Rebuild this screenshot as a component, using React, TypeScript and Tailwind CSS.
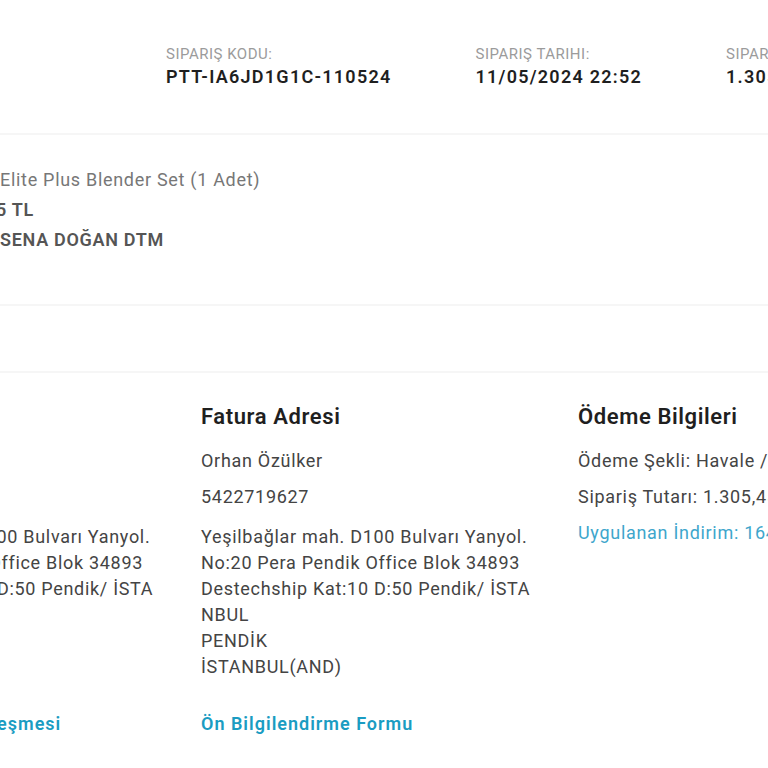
import React from 'react';

const addressLines = [
  'Yeşilbağlar mah. D100 Bulvarı Yanyol.',
  'No:20 Pera Pendik Office Blok 34893',
  'Destechship Kat:10 D:50 Pendik/ İSTA',
  'NBUL',
  'PENDİK',
  'İSTANBUL(AND)',
];

function OrderMeta({ label, value }: { label: string; value: string }) {
  return (
    <div className="flex flex-col shrink-0">
      <span className="text-[15px] leading-[20px] tracking-[0.5px] text-[#9b9b9b] uppercase">{label}</span>
      <span className="text-[18px] leading-[26px] tracking-[1.25px] font-semibold text-[#1f1f1f] whitespace-nowrap">
        {value}
      </span>
    </div>
  );
}

function ProductLine({ hidden, text, className, hiddenClass }: { hidden: string; text: string; className: string; hiddenClass: string }) {
  return (
    <div className={`flex whitespace-nowrap ${className}`}>
      <span className={`shrink-0 text-right overflow-hidden ${hiddenClass}`}>{hidden}</span>
      <span>{text}</span>
    </div>
  );
}

function AddressBlock({ title, link }: { title: string; link: string }) {
  return (
    <div className="flex flex-col">
      <h3 className="text-[22px] leading-[30px] tracking-[0.6px] font-semibold text-[#1f1f1f]">{title}</h3>
      <p className="mt-[11px] leading-[36px]">Orhan Özülker</p>
      <p className="leading-[36px]">5422719627</p>
      <div className="mt-[9px] leading-[26px]">
        {addressLines.map((line) => (
          <p key={line} className="whitespace-nowrap">{line}</p>
        ))}
      </div>
      <a className="mt-[31px] leading-[26px] tracking-[1px] font-semibold text-[#1a9cc2] whitespace-nowrap">{link}</a>
    </div>
  );
}

export default function App() {
  return (
    <div
      className="w-[768px] h-[768px] overflow-hidden bg-white text-[18px] tracking-[0.7px] text-[#444444]"
      style={{ fontFamily: 'Roboto, "Noto Sans", sans-serif' }}
    >
      {/* Sipariş özeti */}
      <div className="flex gap-[84px] pl-[166px] pt-[44px] h-[135px] border-b-2 border-[#f6f6f6]">
        <OrderMeta label="Sipariş Kodu:" value="PTT-IA6JD1G1C-110524" />
        <OrderMeta label="Sipariş Tarihi:" value="11/05/2024 22:52" />
        <OrderMeta label="Sipariş Tutarı:" value="1.305,45 TL" />
      </div>

      {/* Ürün */}
      <div className="h-[171px] border-b-2 border-[#f6f6f6]">
        <div className="-ml-[200px] pt-[30px] leading-[30px]">
          <ProductLine hidden="Braun " text="Elite Plus Blender Set (1 Adet)" className="text-[#777777]" hiddenClass="w-[200px]" />
          <ProductLine hidden="1.30" text="5 TL" className="font-semibold text-[#555555]" hiddenClass="w-[196px]" />
          <ProductLine hidden="" text="SENA DOĞAN DTM" className="font-semibold text-[#555555]" hiddenClass="w-[200px]" />
        </div>
      </div>

      <div className="h-[67px] border-b-2 border-[#f6f6f6]" />

      {/* Adres ve ödeme */}
      <div className="-ml-[176px] pt-[29px] grid grid-cols-[377px_377px_377px]">
        <AddressBlock title="Teslimat Adresi" link="Mesafeli Satış Sözleşmesi" />
        <AddressBlock title="Fatura Adresi" link="Ön Bilgilendirme Formu" />
        <div className="flex flex-col">
          <h3 className="text-[22px] leading-[30px] tracking-[0.6px] font-semibold text-[#1f1f1f]">Ödeme Bilgileri</h3>
          <p className="mt-[11px] leading-[36px] whitespace-nowrap">Ödeme Şekli: Havale / EFT</p>
          <p className="leading-[36px] whitespace-nowrap">Sipariş Tutarı: 1.305,45 TL</p>
          <p className="leading-[36px] text-[#3ea6cc] whitespace-nowrap">Uygulanan İndirim: 164,55 TL</p>
        </div>
      </div>
    </div>
  );
}
